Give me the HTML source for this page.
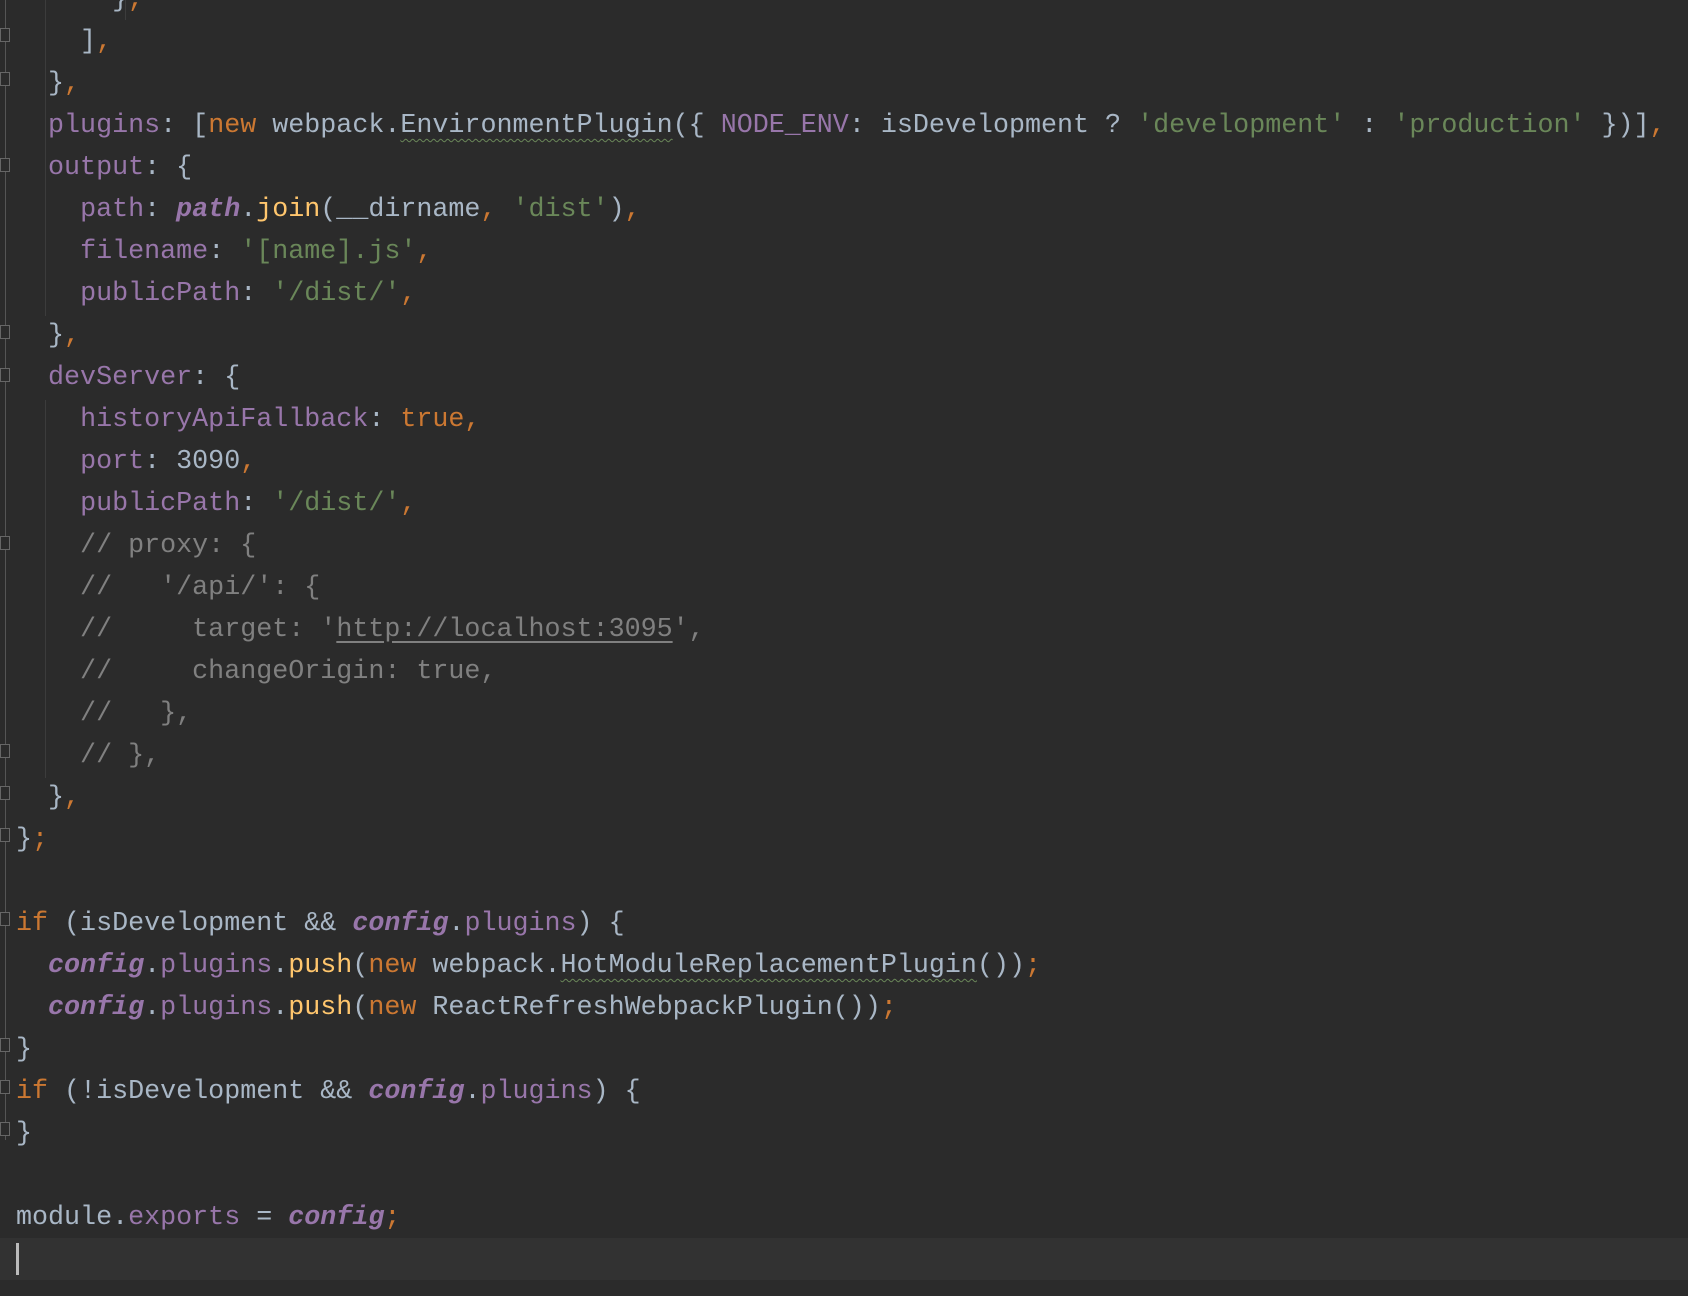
<!DOCTYPE html>
<html><head><meta charset="utf-8"><style>
body{margin:0;width:1688px;height:1296px;background:#2b2b2b;overflow:hidden;position:relative;font-family:"Liberation Mono",monospace;}
.l{position:absolute;left:16px;height:42px;line-height:42px;font-size:26.7px;white-space:pre;color:#a9b7c6;}
.p{color:#9876aa}.o{color:#cc7832}.g{color:#6a8759}.y{color:#ffc66d}.c{color:#808080}
.i{color:#9876aa;font-style:italic;font-weight:bold}
.w{text-decoration:underline wavy #6a8759;text-underline-offset:6px;text-decoration-thickness:1px}
.u{text-decoration:underline;text-underline-offset:5px}
.gv{position:absolute;width:1px;background:#3c3c3c}
.fold{position:absolute;left:0;width:10px;height:14px;border:1px solid #666;box-sizing:border-box;background:#2b2b2b}
</style></head><body>
<div style="position:absolute;left:0;top:1238px;width:1688px;height:42px;background:#323232"></div>
<div class="gv" style="left:5px;top:0;height:1140px;background:#555"></div>
<div class="gv" style="left:45px;top:0;height:190px"></div>
<div class="gv" style="left:125px;top:0;height:20px"></div>
<div class="gv" style="left:45px;top:190px;height:126px"></div>
<div class="gv" style="left:45px;top:400px;height:378px"></div>
<div class="fold" style="top:28px"></div><div class="fold" style="top:72px"></div>
<div class="fold" style="top:158px"></div><div class="fold" style="top:325px"></div>
<div class="fold" style="top:368px"></div><div class="fold" style="top:536px"></div>
<div class="fold" style="top:744px"></div><div class="fold" style="top:786px"></div>
<div class="fold" style="top:828px"></div><div class="fold" style="top:912px"></div>
<div class="fold" style="top:1038px"></div><div class="fold" style="top:1080px"></div>
<div class="fold" style="top:1122px"></div>
<div class="l" style="top:-21px">      }<span class="o">,</span></div>
<div class="l" style="top:21px">    ]<span class="o">,</span></div>
<div class="l" style="top:63px">  }<span class="o">,</span></div>
<div class="l" style="top:105px">  <span class="p">plugins</span>: [<span class="o">new </span>webpack.<span class="w">EnvironmentPlugin</span>({ <span class="p">NODE_ENV</span>: isDevelopment ? <span class="g">'development'</span> : <span class="g">'production'</span> })]<span class="o">,</span></div>
<div class="l" style="top:147px">  <span class="p">output</span>: {</div>
<div class="l" style="top:189px">    <span class="p">path</span>: <span class="i">path</span>.<span class="y">join</span>(__dirname<span class="o">, </span><span class="g">'dist'</span>)<span class="o">,</span></div>
<div class="l" style="top:231px">    <span class="p">filename</span>: <span class="g">'[name].js'</span><span class="o">,</span></div>
<div class="l" style="top:273px">    <span class="p">publicPath</span>: <span class="g">'/dist/'</span><span class="o">,</span></div>
<div class="l" style="top:315px">  }<span class="o">,</span></div>
<div class="l" style="top:357px">  <span class="p">devServer</span>: {</div>
<div class="l" style="top:399px">    <span class="p">historyApiFallback</span>: <span class="o">true,</span></div>
<div class="l" style="top:441px">    <span class="p">port</span>: 3090<span class="o">,</span></div>
<div class="l" style="top:483px">    <span class="p">publicPath</span>: <span class="g">'/dist/'</span><span class="o">,</span></div>
<div class="l c" style="top:525px">    // proxy: {</div>
<div class="l c" style="top:567px">    //   '/api/': {</div>
<div class="l c" style="top:609px">    //     target: '<span class="u">http://localhost:3095</span>',</div>
<div class="l c" style="top:651px">    //     changeOrigin: true,</div>
<div class="l c" style="top:693px">    //   },</div>
<div class="l c" style="top:735px">    // },</div>
<div class="l" style="top:777px">  }<span class="o">,</span></div>
<div class="l" style="top:819px">}<span class="o">;</span></div>
<div class="l" style="top:903px"><span class="o">if </span>(isDevelopment &amp;&amp; <span class="i">config</span>.<span class="p">plugins</span>) {</div>
<div class="l" style="top:945px">  <span class="i">config</span>.<span class="p">plugins</span>.<span class="y">push</span>(<span class="o">new </span>webpack.<span class="w">HotModuleReplacementPlugin</span>())<span class="o">;</span></div>
<div class="l" style="top:987px">  <span class="i">config</span>.<span class="p">plugins</span>.<span class="y">push</span>(<span class="o">new </span>ReactRefreshWebpackPlugin())<span class="o">;</span></div>
<div class="l" style="top:1029px">}</div>
<div class="l" style="top:1071px"><span class="o">if </span>(!isDevelopment &amp;&amp; <span class="i">config</span>.<span class="p">plugins</span>) {</div>
<div class="l" style="top:1113px">}</div>
<div class="l" style="top:1197px">module.<span class="p">exports</span> = <span class="i">config</span><span class="o">;</span></div>
<div style="position:absolute;left:16px;top:1243px;width:3px;height:32px;background:#bbbbbb"></div>
</body></html>
